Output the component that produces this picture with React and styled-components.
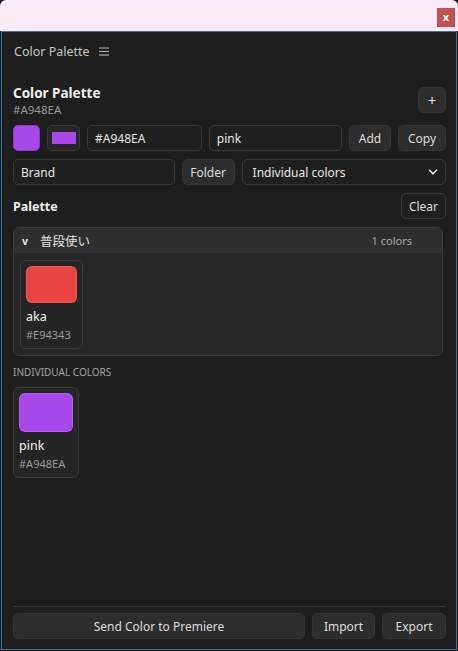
import React from "react";
import styled, { createGlobalStyle } from "styled-components";
import { ChevronDown } from "lucide-react";

const GlobalStyle = createGlobalStyle`
  html, body {
    margin: 0;
    padding: 0;
    background: #1e1e1e;
  }
  body {
    font-family: "Noto Sans", "Noto Sans CJK JP", sans-serif;
  }
  * {
    box-sizing: border-box;
  }
`;

const Window = styled.div`
  width: 458px;
  height: 651px;
  display: flex;
  flex-direction: column;
  background: #1a1a1a;
`;

const TitleBar = styled.div`
  height: 31px;
  flex-shrink: 0;
  background: #f9ecf6;
  border-radius: 6px 6px 0 0;
  display: flex;
  justify-content: flex-end;
  align-items: flex-start;
  padding: 8px 3px 0 0;
`;

const CloseButton = styled.div`
  width: 18px;
  height: 19px;
  background: #c74f50;
  color: #fff;
  font-size: 11px;
  font-weight: 700;
  display: flex;
  align-items: center;
  justify-content: center;
  line-height: 1;
  padding-bottom: 2px;
`;

const Panel = styled.div`
  flex: 1;
  margin: 0 1px 1px 1px;
  border: 1px solid #3f6f9f;
  background: #1e1e1e;
  display: flex;
  flex-direction: column;
  padding: 0 10px 10px 11px;
`;

const PanelHeader = styled.div`
  height: 38px;
  display: flex;
  align-items: center;
  gap: 9px;
  padding-left: 1px;
  color: #c4c4c4;
  font-size: 12.5px;
`;

const Content = styled.div`
  flex: 1;
  display: flex;
  flex-direction: column;
  gap: 8px;
  padding-top: 13px;
`;

const TitleRow = styled.div`
  display: flex;
  align-items: center;
  justify-content: space-between;
`;

const TitleBlock = styled.div`
  display: flex;
  flex-direction: column;
  padding-top: 1px;
`;

const Title = styled.div`
  font-size: 13.5px;
  font-weight: 700;
  color: #f0f0f0;
  line-height: 18px;
`;

const SubHex = styled.div`
  font-size: 11.5px;
  color: #999;
  line-height: 15px;
`;

const Row = styled.div`
  display: flex;
  align-items: stretch;
  gap: ${(p) => p.$gap || 7}px;
  height: 26px;
`;

const Button = styled.div`
  flex: ${(p) => (p.$grow ? p.$grow + " 1 0" : "0 0 auto")};
  width: ${(p) => (p.$w ? p.$w + "px" : "auto")};
  height: 26px;
  display: flex;
  align-items: center;
  justify-content: center;
  background: ${(p) => (p.$ghost ? "#1f1f1f" : "#2d2d2d")};
  border: 1px solid ${(p) => (p.$ghost ? "#3a3a3a" : "#343434")};
  border-radius: 5px;
  color: #dcdcdc;
  font-size: 12px;
`;

const Input = styled.div`
  flex: ${(p) => p.$grow} 1 0;
  min-width: 0;
  display: flex;
  align-items: center;
  padding: 0 ${(p) => p.$pad || 7}px;
  background: #1f1f1f;
  border: 1px solid #3a3a3a;
  border-radius: 5px;
  color: #e6e6e6;
  font-size: 12px;
  justify-content: space-between;
`;

const Swatch = styled.div`
  width: 27px;
  border-radius: 5px;
  background: ${(p) => p.$color};
  border: 1px solid #8a3bc2;
`;

const ColorInput = styled.div`
  width: 33px;
  display: flex;
  align-items: center;
  justify-content: center;
  background: #252525;
  border: 1px solid #3a3a3a;
  border-radius: 5px;
`;

const ColorInner = styled.div`
  width: 24px;
  height: 12px;
  background: ${(p) => p.$color};
`;

const SectionTitle = styled.div`
  font-size: 12.5px;
  font-weight: 700;
  color: #f0f0f0;
`;

const Group = styled.div`
  margin-right: 3px;
  background: #262626;
  border: 1px solid #3a3a3a;
  border-radius: 6px;
  overflow: hidden;
`;

const GroupHeader = styled.div`
  height: 25px;
  background: #2e2e2e;
  display: flex;
  align-items: center;
  padding: 0 30px 0 8px;
  color: #e2e2e2;
  font-size: 12px;
`;

const Caret = styled.span`
  font-size: 10.5px;
  font-weight: 700;
  width: 18px;
`;

const GroupName = styled.span`
  flex: 1;
  font-family: "Noto Sans CJK JP", sans-serif;
  font-size: 12.5px;
`;

const Count = styled.span`
  color: #a8a8a8;
  font-size: 11px;
`;

const GroupBody = styled.div`
  padding: 7px 6px 6px 6px;
  display: flex;
  gap: 8px;
`;

const Card = styled.div`
  display: flex;
  flex-direction: column;
  padding: 5px 5px 4px 5px;
  background: #252525;
  border: 1px solid #3a3a3a;
  border-radius: 6px;
`;

const CardSwatch = styled.div`
  width: ${(p) => p.$w}px;
  height: ${(p) => p.$h}px;
  background: ${(p) => p.$color};
  border-radius: 6px;
  border: 1px solid rgba(255, 255, 255, 0.12);
`;

const CardName = styled.div`
  margin-top: 5px;
  font-size: 12.5px;
  color: #f2f2f2;
  line-height: 18px;
`;

const CardHex = styled.div`
  font-size: 11px;
  color: #999;
  line-height: 18px;
`;

const SmallLabel = styled.div`
  font-size: 10px;
  color: #a4a4a4;
  margin-top: 1px;
`;

const Footer = styled.div`
  border-top: 1px solid #3a3a3a;
  padding-top: 6px;
`;

function MenuIcon() {
  return (
    <svg width="10" height="9" viewBox="0 0 10 9">
      <path d="M0 1h10M0 4.5h10M0 8h10" stroke="#bbb" strokeWidth="1" />
    </svg>
  );
}

function ColorCard({ name, hex, w, h }) {
  return (
    <Card>
      <CardSwatch $color={hex} $w={w} $h={h} />
      <CardName>{name}</CardName>
      <CardHex>{hex}</CardHex>
    </Card>
  );
}

export default function App() {
  return (
    <>
      <GlobalStyle />
      <Window>
        <TitleBar>
          <CloseButton>x</CloseButton>
        </TitleBar>
        <Panel>
          <PanelHeader>
            Color Palette
            <MenuIcon />
          </PanelHeader>
          <Content>
            <TitleRow>
              <TitleBlock>
                <Title>Color Palette</Title>
                <SubHex>#A948EA</SubHex>
              </TitleBlock>
              <Button $w={28} style={{ fontSize: 15 }}>+</Button>
            </TitleRow>
            <Row>
              <Swatch $color="#A948EA" />
              <ColorInput>
                <ColorInner $color="#A948EA" />
              </ColorInput>
              <Input $grow={113}>#A948EA</Input>
              <Input $grow={134}>pink</Input>
              <Button $w={42}>Add</Button>
              <Button $w={48}>Copy</Button>
            </Row>
            <Row>
              <Input $grow={162}>Brand</Input>
              <Button $w={53}>Folder</Button>
              <Input $grow={203} $pad={10}>
                Individual colors
                <ChevronDown size={14} strokeWidth={3} color="#e6e6e6" style={{ marginRight: -5 }} />
              </Input>
            </Row>
            <TitleRow>
              <SectionTitle>Palette</SectionTitle>
              <Button $w={45} $ghost>Clear</Button>
            </TitleRow>
            <Group>
              <GroupHeader>
                <Caret>v</Caret>
                <GroupName>普段使い</GroupName>
                <Count>1 colors</Count>
              </GroupHeader>
              <GroupBody>
                <ColorCard name="aka" hex="#E94343" w={51} h={37} />
              </GroupBody>
            </Group>
            <SmallLabel>INDIVIDUAL COLORS</SmallLabel>
            <div style={{ display: "flex" }}>
              <ColorCard name="pink" hex="#A948EA" w={54} h={39} />
            </div>
          </Content>
          <Footer>
            <Row>
              <Button $grow={291}>Send Color to Premiere</Button>
              <Button $w={63}>Import</Button>
              <Button $w={64}>Export</Button>
            </Row>
          </Footer>
        </Panel>
      </Window>
    </>
  );
}
